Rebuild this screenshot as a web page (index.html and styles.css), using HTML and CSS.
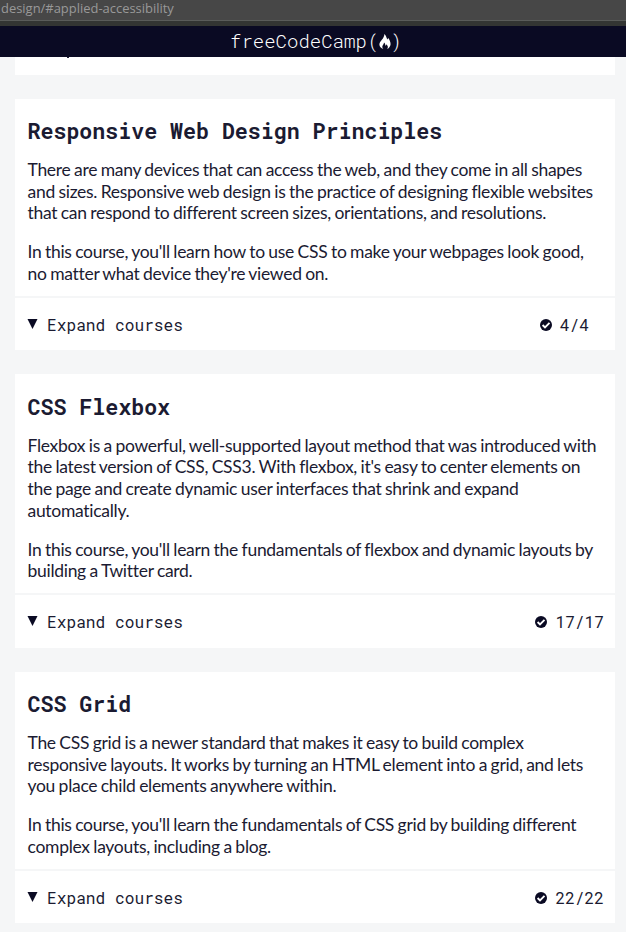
FILE: index.html
```html
<!DOCTYPE html>
<html lang="en">
<head>
<meta charset="utf-8">
<title>Responsive Web Design</title>
<link rel="stylesheet" href="styles.css">
</head>
<body>
<svg class="defs" aria-hidden="true">
  <symbol id="check" viewBox="0 0 12 12"><circle cx="6" cy="6" r="6" fill="#0a0a23"/><path d="M2.6 6 5 8.4 9.5 3.9" fill="none" stroke="#fff" stroke-width="1.9"/></symbol>
  <symbol id="arrow" viewBox="0 0 10 10"><path d="M0 0H10L5 10Z" fill="#0a0a23"/></symbol>
</svg>
<div class="address"><span>design/#applied-accessibility</span></div>
<header class="nav">
  <span class="brand">freeCodeCamp</span><span class="paren">(</span>
  <svg class="flame" viewBox="0 0 12 15"><path d="M5.4 0C7.6 2 7.3 4 8.4 5.4 8.9 5.2 9 4.5 8.9 3.8 11 6 12.2 9.4 11.2 11.8 10.6 13.4 9.6 14.4 8.2 15 9.4 13 8.8 11.8 7.4 10.2 7.3 11.2 6.9 11.6 6.2 11.4 6.4 10 5.9 9 5 8.4 5 10.2 3.3 11.2 3.3 12.8 3.3 13.8 3.7 14.5 4.3 15 2 14.4.3 12.6.4 10.3.5 7.2 5.2 5 5.4 0Z" fill="#fff"/></svg>
  <span class="paren">)</span>
</header>
<main>
  <div class="previous"><i class="tail"></i></div>
  <section class="card">
    <h2>Responsive Web Design Principles</h2>
    <p>There are many devices that can access the web, and they come in all shapes<br>and sizes. Responsive web design is the practice of designing flexible websites<br>that can respond to different screen sizes, orientations, and resolutions.</p>
    <p>In this course, you'll learn how to use CSS to make your webpages look good,<br>no matter what device they're viewed on.</p>
    <div class="toggle"><svg class="arrow"><use href="#arrow"/></svg><span>Expand courses</span><div class="count short"><svg class="check"><use href="#check"/></svg><span>4/4</span></div></div>
  </section>
  <section class="card">
    <h2>CSS Flexbox</h2>
    <p>Flexbox is a powerful, well-supported layout method that was introduced with<br>the latest version of CSS, CSS3. With flexbox, it's easy to center elements on<br>the page and create dynamic user interfaces that shrink and expand<br>automatically.</p>
    <p>In this course, you'll learn the fundamentals of flexbox and dynamic layouts by<br>building a Twitter card.</p>
    <div class="toggle"><svg class="arrow"><use href="#arrow"/></svg><span>Expand courses</span><div class="count"><svg class="check"><use href="#check"/></svg><span>17/17</span></div></div>
  </section>
  <section class="card">
    <h2>CSS Grid</h2>
    <p>The CSS grid is a newer standard that makes it easy to build complex<br>responsive layouts. It works by turning an HTML element into a grid, and lets<br>you place child elements anywhere within.</p>
    <p>In this course, you'll learn the fundamentals of CSS grid by building different<br>complex layouts, including a blog.</p>
    <div class="toggle"><svg class="arrow"><use href="#arrow"/></svg><span>Expand courses</span><div class="count"><svg class="check"><use href="#check"/></svg><span>22/22</span></div></div>
  </section>
</main>
</body>
</html>
```
FILE: styles.css
```css
* { box-sizing: border-box; }
body {
  margin: 0;
  height: 932px;
  overflow: hidden;
  background: #f5f6f7;
  color: #1b1b32;
  font-family: Lato, sans-serif;
}
.defs { display: none; }
.address {
  height: 26px;
  background: linear-gradient(#474747 20px, #5a5c5a 20px, #5a5c5a 21px, #333533 21px);
  color: #999;
  font: 12.95px/16px "Open Sans", sans-serif;
  padding-left: 1px;
}
.nav {
  display: flex;
  height: 31px;
  padding: 0 0 2px 230px;
  align-items: center;
  background: #0a0a23;
  color: #fff;
  font: 300 19px/29px "Roboto Mono", "DejaVu Sans Mono", monospace;
}
.brand { width: 137.5px; }
.paren { width: 11px; }
.flame { width: 12px; height: 15px; margin-top: 2px; }
main { padding: 0 11px 0 15px; }
.previous {
  height: 18px;
  margin-bottom: 23.75px;
  padding-left: 52px;
  background: #fff;
}
.tail { display: block; width: 2px; height: 1px; background: #1b1b32; }
.card {
  margin-bottom: 24px;
  padding-top: 19.2px;
  background: #fff;
}
h2 {
  margin: 0 0 15.2px 12.5px;
  height: 26px;
  font: bold 21.6px/26px "Roboto Mono", "DejaVu Sans Mono", monospace;
  white-space: nowrap;
}
p {
  margin: 0 0 17.4px 12.5px;
  font-size: 17.5px;
  line-height: 21.65px;
  letter-spacing: -0.29px;
  word-spacing: -0.65px;
  white-space: nowrap;
}
p + p { margin-bottom: 11.2px; }
.toggle {
  display: flex;
  align-items: center;
  height: 54.4px;
  padding: 1px 11px 0 12px;
  border-top: 2px solid #f5f6f7;
  font: 16.2px/22px "Roboto Mono", "DejaVu Sans Mono", monospace;
}
.arrow { width: 11px; height: 10px; margin: -2px 9px 0 0; }
.count { display: flex; align-items: center; margin-left: auto; }
.short { margin-right: 15px; }
.check { width: 12px; height: 12px; margin-right: 8px; }
```
